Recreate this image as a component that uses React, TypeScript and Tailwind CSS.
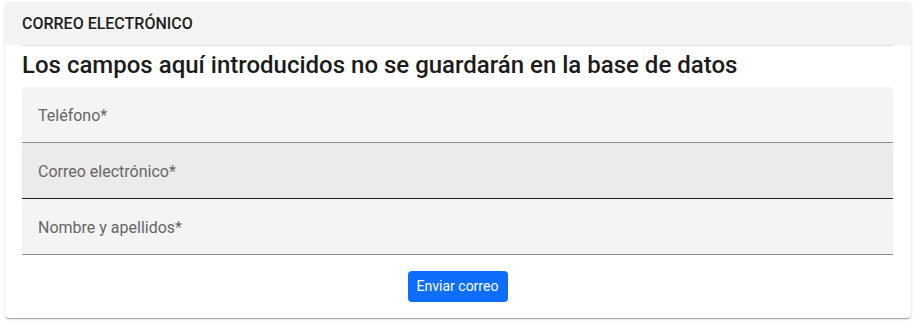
export default function App() {
  const fields = [
    { label: "Teléfono*", hover: false },
    { label: "Correo electrónico*", hover: true },
    { label: "Nombre y apellidos*", hover: false },
  ];
  return (
    <div className="w-[917px] h-[322px] bg-white pt-[2px] pl-[5px]" style={{ fontFamily: "Roboto, 'Noto Sans', sans-serif" }}>
      <div className="w-[906px] h-[316px] bg-white rounded-[4px] shadow-[0_2px_1px_-1px_rgba(0,0,0,0.2),0_1px_1px_0_rgba(0,0,0,0.14),0_1px_3px_0_rgba(0,0,0,0.12)] overflow-hidden">
        <div className="h-[43px] bg-[#f4f4f4] px-[17px] flex items-center">
          <span className="text-[16px] font-medium text-[#1f1f1f] leading-none">CORREO ELECTRÓNICO</span>
        </div>
        <div className="px-[17px] pr-[18px]">
          <div className="h-px bg-[#e0e0e0]"></div>
          <h2 className="text-[24px] font-medium text-[#1c1c1c] leading-[36px] mt-[1px]">
            Los campos aquí introducidos no se guardarán en la base de datos
          </h2>
          <div className="mt-[4px] flex flex-col">
            {fields.map((f) => (
              <div
                key={f.label}
                className={
                  f.hover
                    ? "h-[56px] bg-[#ebebeb] rounded-t-[4px] border-b border-[#1f1f1f] flex items-center px-[16px] pt-[3px]"
                    : "h-[56px] bg-[#f4f4f4] rounded-t-[4px] border-b border-[#8f8f8f] flex items-center px-[16px] pt-[3px]"
                }
              >
                <span className="text-[16px] text-[#666666]">{f.label}</span>
              </div>
            ))}
          </div>
          <div className="flex justify-center mt-[16px]">
            <button className="w-[100px] h-[31px] bg-[#0d6efd] text-white text-[14px] rounded-[4px] flex items-center justify-center">
              Enviar correo
            </button>
          </div>
        </div>
      </div>
    </div>
  );
}
